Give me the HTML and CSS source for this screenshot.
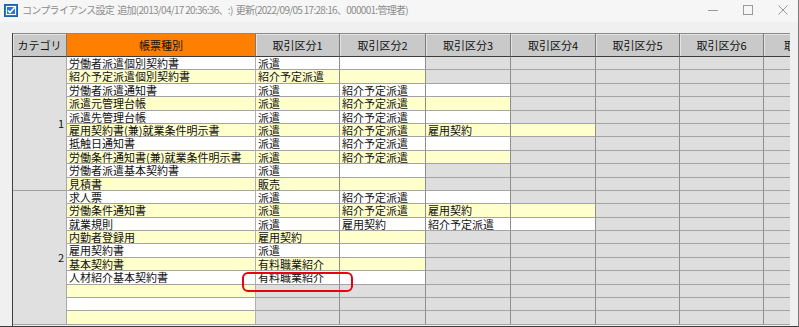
FILE: index.html
```html
<!DOCTYPE html>
<html lang="ja">
<head>
<meta charset="utf-8">
<title>コンプライアンス設定</title>
<link rel="stylesheet" href="styles.css">
</head>
<body>
<div class="window">
  <div class="titlebar">
    <svg class="app-icon" width="14" height="13" viewBox="0 0 14 13">
      <rect x="0.5" y="0.5" width="13" height="12" fill="#2b79d6" stroke="#1c5fb0"/>
      <rect x="2.5" y="2.5" width="9" height="8" fill="none" stroke="#ffffff" stroke-width="1"/>
      <path d="M4 6.5 L6 8.5 L11.5 2.5" fill="none" stroke="#ffffff" stroke-width="1.6"/>
    </svg>
    <div class="title">コンプライアンス設定&nbsp;&nbsp;追加(2013/04/17 20:36:36、:)&nbsp;&nbsp;更新(2022/09/05 17:28:16、000001:管理者)</div>
    <div class="controls">
      <svg width="12" height="12" viewBox="0 0 12 12"><path d="M1 6.5 H11" stroke="#9a9a9a" stroke-width="1"/></svg>
      <svg width="12" height="12" viewBox="0 0 12 12"><rect x="1.5" y="1.5" width="9" height="9" fill="none" stroke="#9a9a9a" stroke-width="1"/></svg>
      <svg width="12" height="12" viewBox="0 0 12 12"><path d="M1.5 1.5 L10.5 10.5 M10.5 1.5 L1.5 10.5" stroke="#9a9a9a" stroke-width="1"/></svg>
    </div>
  </div>
  <div class="client">
    <div class="grid-wrap">
      <div class="grid">
        <div class="hd">カテゴリ</div>
        <div class="hd hd-main">帳票種別</div>
        <div class="hd">取引区分1</div>
        <div class="hd">取引区分2</div>
        <div class="hd">取引区分3</div>
        <div class="hd">取引区分4</div>
        <div class="hd">取引区分5</div>
        <div class="hd">取引区分6</div>
        <div class="hd hd-last">取引区分7</div>

        <div class="cat">1</div>
        <div class="c t w">労働者派遣個別契約書</div><div class="c w">派遣</div><div class="c w"></div><div class="c g"></div><div class="c g"></div><div class="c g"></div><div class="c g"></div><div class="c g"></div>
        <div class="c t y">紹介予定派遣個別契約書</div><div class="c y">紹介予定派遣</div><div class="c y"></div><div class="c g"></div><div class="c g"></div><div class="c g"></div><div class="c g"></div><div class="c g"></div>
        <div class="c t w">労働者派遣通知書</div><div class="c w">派遣</div><div class="c w">紹介予定派遣</div><div class="c w"></div><div class="c g"></div><div class="c g"></div><div class="c g"></div><div class="c g"></div>
        <div class="c t y">派遣元管理台帳</div><div class="c y">派遣</div><div class="c y">紹介予定派遣</div><div class="c y"></div><div class="c g"></div><div class="c g"></div><div class="c g"></div><div class="c g"></div>
        <div class="c t w">派遣先管理台帳</div><div class="c w">派遣</div><div class="c w">紹介予定派遣</div><div class="c w"></div><div class="c g"></div><div class="c g"></div><div class="c g"></div><div class="c g"></div>
        <div class="c t y">雇用契約書(兼)就業条件明示書</div><div class="c y">派遣</div><div class="c y">紹介予定派遣</div><div class="c y">雇用契約</div><div class="c y"></div><div class="c g"></div><div class="c g"></div><div class="c g"></div>
        <div class="c t w">抵触日通知書</div><div class="c w">派遣</div><div class="c w">紹介予定派遣</div><div class="c w"></div><div class="c g"></div><div class="c g"></div><div class="c g"></div><div class="c g"></div>
        <div class="c t y">労働条件通知書(兼)就業条件明示書</div><div class="c y">派遣</div><div class="c y">紹介予定派遣</div><div class="c y"></div><div class="c g"></div><div class="c g"></div><div class="c g"></div><div class="c g"></div>
        <div class="c t w">労働者派遣基本契約書</div><div class="c w">派遣</div><div class="c w"></div><div class="c g"></div><div class="c g"></div><div class="c g"></div><div class="c g"></div><div class="c g"></div>
        <div class="c t y">見積書</div><div class="c y">販売</div><div class="c y"></div><div class="c g"></div><div class="c g"></div><div class="c g"></div><div class="c g"></div><div class="c g"></div>

        <div class="cat">2</div>
        <div class="c t w">求人票</div><div class="c w">派遣</div><div class="c w">紹介予定派遣</div><div class="c w"></div><div class="c g"></div><div class="c g"></div><div class="c g"></div><div class="c g"></div>
        <div class="c t y">労働条件通知書</div><div class="c y">派遣</div><div class="c y">紹介予定派遣</div><div class="c y">雇用契約</div><div class="c y"></div><div class="c g"></div><div class="c g"></div><div class="c g"></div>
        <div class="c t w">就業規則</div><div class="c w">派遣</div><div class="c w">雇用契約</div><div class="c w">紹介予定派遣</div><div class="c w"></div><div class="c g"></div><div class="c g"></div><div class="c g"></div>
        <div class="c t y">内勤者登録用</div><div class="c y">雇用契約</div><div class="c y"></div><div class="c g"></div><div class="c g"></div><div class="c g"></div><div class="c g"></div><div class="c g"></div>
        <div class="c t w">雇用契約書</div><div class="c w">派遣</div><div class="c w"></div><div class="c g"></div><div class="c g"></div><div class="c g"></div><div class="c g"></div><div class="c g"></div>
        <div class="c t y">基本契約書</div><div class="c y">有料職業紹介</div><div class="c y"></div><div class="c g"></div><div class="c g"></div><div class="c g"></div><div class="c g"></div><div class="c g"></div>
        <div class="c t w">人材紹介基本契約書</div><div class="c w">有料職業紹介</div><div class="c w"></div><div class="c g"></div><div class="c g"></div><div class="c g"></div><div class="c g"></div><div class="c g"></div>
        <div class="c t y"></div><div class="c g"></div><div class="c g"></div><div class="c g"></div><div class="c g"></div><div class="c g"></div><div class="c g"></div><div class="c g"></div>
        <div class="c t w"></div><div class="c g"></div><div class="c g"></div><div class="c g"></div><div class="c g"></div><div class="c g"></div><div class="c g"></div><div class="c g"></div>
        <div class="c t y"></div><div class="c g"></div><div class="c g"></div><div class="c g"></div><div class="c g"></div><div class="c g"></div><div class="c g"></div><div class="c g"></div>
      </div>
      <div class="highlight"></div>
    </div>
  </div>
</div>
</body>
</html>
```

FILE: styles.css
```css
html, body {
  margin: 0;
  padding: 0;
}
body {
  width: 799px;
  height: 327px;
  overflow: hidden;
  background: #f0f0f0;
  font-family: "Noto Sans CJK JP", "Noto Sans", sans-serif;
}
.window {
  width: 799px;
  height: 327px;
  box-sizing: border-box;
  border-right: 1px solid #7a7a7a;
  border-bottom: 1px solid #3a3a3a;
  display: flex;
  flex-direction: column;
  background: #f0f0f0;
}
.titlebar {
  height: 22px;
  flex: none;
  display: flex;
  align-items: center;
  background: #f6f6f6;
  padding-left: 4px;
}
.app-icon {
  flex: none;
  margin-top: -2px;
}
.title {
  margin-left: 4px;
  font-size: 10px;
  line-height: 13px;
  color: #8c8c8c;
  white-space: nowrap;
  flex: 1;
  margin-top: -3px;
  letter-spacing: -0.7px;
}
.controls {
  display: flex;
  gap: 23px;
  margin-right: 9px;
  margin-top: -3px;
}
.client {
  flex: 1;
  padding: 11px 7px 0 12px;
  overflow: hidden;
}
.grid-wrap {
  position: relative;
  width: 778px;
  height: 293px;
  overflow: hidden;
  border-left: 1px solid #404040;
  box-sizing: border-box;
}
.grid {
  display: grid;
  grid-template-columns: 54px 189px 84px 86px 85px 85px 84px 84px 84px;
  grid-template-rows: 24px repeat(20, 13.4px);
  width: max-content;
  background: #dedede;
}
.hd {
  box-sizing: border-box;
  background: #c9c9c9;
  border-top: 1px solid #8a8a8a;
  border-right: 1px solid #7a7a7a;
  border-bottom: 1px solid #3c3c3c;
  box-shadow: inset 1px 1px 0 #e4e4e4;
  font-size: 11px;
  line-height: 22px;
  text-align: center;
  color: #111;
  white-space: nowrap;
}
.hd-last {
  text-align: left;
  padding-left: 20px;
}
.hd-main {
  background: #ff8000;
  box-shadow: none;
}
.cat {
  grid-row: span 10;
  box-sizing: border-box;
  background: #e0e0e0;
  border-right: 1px solid #a8a8a8;
  border-bottom: 1px solid #a0a0a0;
  display: flex;
  align-items: center;
  justify-content: flex-end;
  padding-right: 2px;
  font-size: 11px;
  color: #111;
}
.c {
  box-sizing: border-box;
  border-right: 1px solid #8e8e8e;
  border-bottom: 1px solid #a4a4a4;
  font-size: 11px;
  line-height: 13px;
  padding-left: 2px;
  white-space: nowrap;
  color: #111;
}
.t {
  border-right-color: #b0b0b0;
}
.w {
  background: #ffffff;
}
.y {
  background: #ffffcc;
}
.g {
  background: #dedede;
}
.highlight {
  position: absolute;
  left: 229px;
  top: 239px;
  width: 111px;
  height: 20px;
  box-sizing: border-box;
  border: 2.5px solid #e60012;
  border-radius: 6px;
}
```
